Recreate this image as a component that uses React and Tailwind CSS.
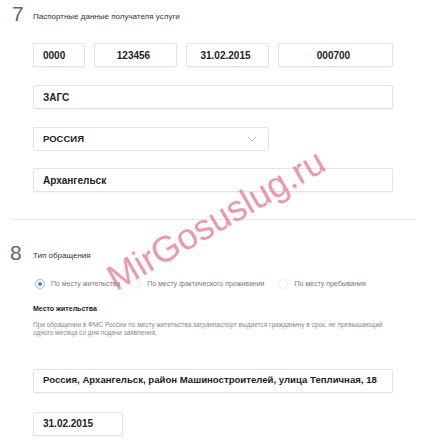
import React from "react";

const Field = ({ value, className = "", align = "left" }) => (
  <div
    className={`h-[24px] flex items-center border border-[#e3e3e3] rounded-[2px] bg-white shadow-[0_1px_1px_rgba(0,0,0,0.04)] font-bold text-[#222] ${
      align === "center" ? "justify-center pr-[4px]" : "pl-[9px]"
    } ${className}`}
  >
    {value}
  </div>
);

const Radio = ({ label, checked }) => (
  <div className="flex items-center gap-[6px]">
    <span
      className={`w-[10px] h-[10px] rounded-full border flex items-center justify-center ${
        checked ? "border-[#9fb6cc]" : "border-[#ececec]"
      }`}
    >
      {checked && <span className="w-[4px] h-[4px] rounded-full bg-[#4a86c5]" />}
    </span>
    <span className="text-[7px] text-[#777]">{label}</span>
  </div>
);

export default function App() {
  return (
    <div className="relative w-[424px] h-[444px] overflow-hidden bg-white font-['Liberation_Sans',Arial,sans-serif]">
      {/* step 7 */}
      <div className="flex pl-[12px] pt-[2px]">
        <div className="w-[21px] text-[21px] leading-[21px] font-light text-[#666] pt-[1px]">7</div>
        <div className="flex-1 pr-[31px]">
          <div className="text-[8px] leading-[10px] text-[#333] mt-[10px]">
            Паспортные данные получателя услуги
          </div>
          <div className="flex gap-[9px] mt-[21px] text-[10px]">
            <Field value="0000" className="w-[52px]" />
            <Field value="123456" className="w-[83px]" align="center" />
            <Field value="31.02.2015" className="w-[83px]" align="center" />
            <Field value="000700" className="flex-1" align="center" />
          </div>
          <Field value="ЗАГС" className="mt-[18px] text-[10px]" />
          <div className="mt-[18px] w-[236px] h-[24px] flex items-center justify-between border border-[#e3e3e3] rounded-[2px] pl-[9px] pr-[11px] text-[9.5px] font-bold text-[#222]">
            <span>РОССИЯ</span>
            <svg width="10" height="6" viewBox="0 0 10 6" fill="none" stroke="#b5b5b5" strokeWidth="0.9">
              <path d="M1 1l4 4 4-4" />
            </svg>
          </div>
          <Field value="Архангельск" className="mt-[17px] text-[10px]" />
        </div>
      </div>

      <div className="ml-[12px] mr-[9px] mt-[27px] border-t border-[#e8e8e8]" />

      {/* step 8 */}
      <div className="flex pl-[10px] pt-[22px]">
        <div className="w-[23px] text-[21px] leading-[21px] font-light text-[#666]">8</div>
        <div className="flex-1 pr-[31px]">
          <div className="text-[8px] leading-[10px] text-[#333] mt-[9px]">Тип обращения</div>
          <div className="flex items-center mt-[18px] pl-[2px]">
            <Radio label="По месту жительства" checked />
            <div className="ml-[11px]">
              <Radio label="По месту фактического проживания" />
            </div>
            <div className="ml-[14px]">
              <Radio label="По месту пребывания" />
            </div>
          </div>
          <div className="mt-[14px] text-[7px] leading-[9px] font-bold text-[#222]">Место жительства</div>
          <div className="mt-[8px] text-[6.5px] leading-[8px] text-[#888] whitespace-nowrap">
            При обращении в ФМС России по месту жительства загранпаспорт выдается гражданину в срок, не превышающий
            <br />
            одного месяца со дня подачи заявления.
          </div>
          <Field
            value="Россия, Архангельск, район Машиностроителей, улица Тепличная, 18"
            className="mt-[32px] text-[9.6px]"
          />
          <Field value="31.02.2015" className="mt-[19px] w-[90px] text-[10px]" />
        </div>
      </div>

      {/* watermark */}
      <div className="absolute left-[94px] top-[200px] w-[244px] text-center text-[36px] leading-[40px] whitespace-nowrap text-[#e5809a] opacity-80 -rotate-[30deg] pointer-events-none">
        MirGosuslug.ru
      </div>
    </div>
  );
}
